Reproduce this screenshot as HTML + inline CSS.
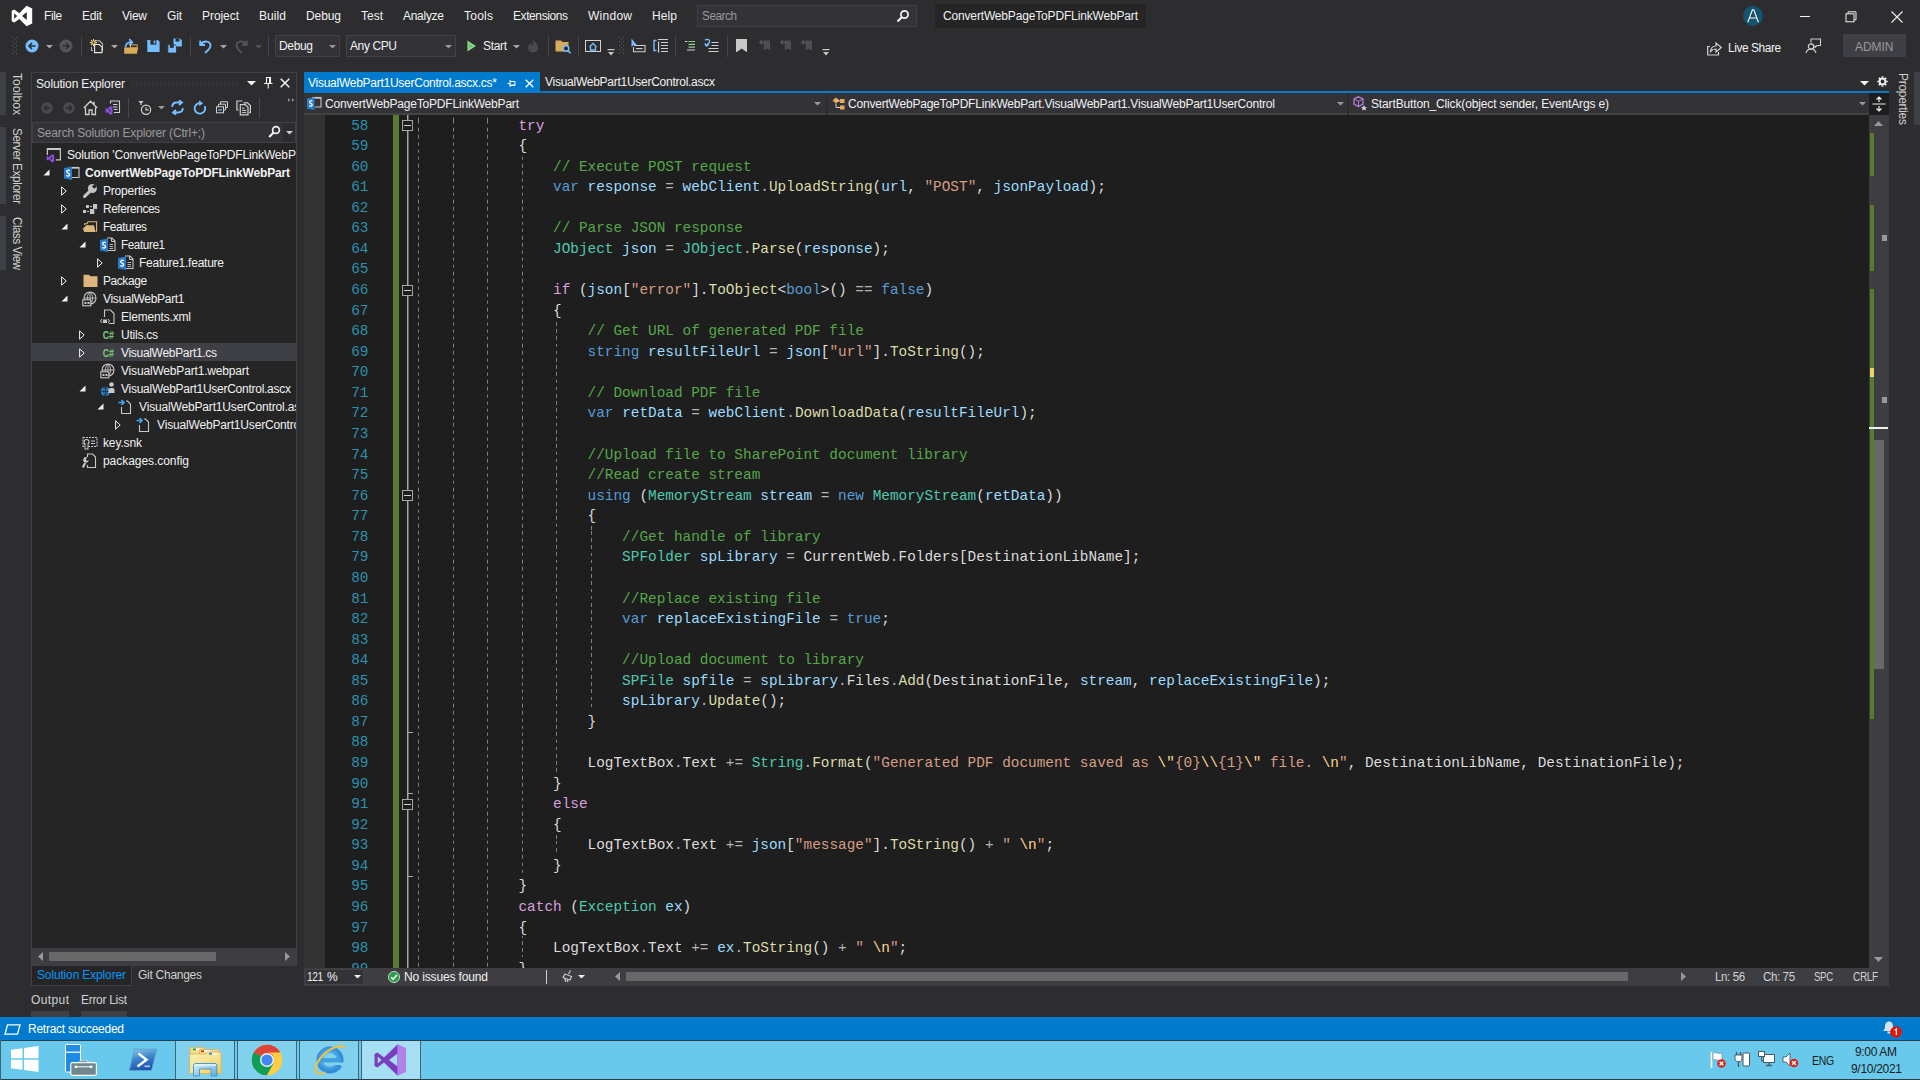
<!DOCTYPE html>
<html><head><meta charset="utf-8"><title>VS</title><style>
html,body{margin:0;padding:0;font-family:"Liberation Sans", sans-serif;}
body{width:1920px;height:1080px;overflow:hidden;background:#2D2D30;position:relative;font-family:"Liberation Sans", sans-serif;font-size:12px;}
.b{position:absolute;display:block;}
.t{position:absolute;white-space:pre;}
.cl{position:absolute;white-space:pre;font-family:"Liberation Mono", monospace;font-size:14.4px;line-height:20px;color:#DCDCDC;left:380.3px;}
.k{color:#569CD6}.c{color:#D8A0DF}.m{color:#57A64A}.s{color:#D69D85}.e{color:#FFD68F}.y{color:#4EC9B0}.v{color:#9CDCFE}.f{color:#DCDCAA}.o{color:#B4B4B4}
</style></head><body>
<div class="t" id="t1" style="left:44px;top:8px;font-size:12px;line-height:16px;color:#F1F1F1;letter-spacing:-0.400px;transform:scaleX(0.9926);transform-origin:0 50%;">File</div>
<div class="t" id="t2" style="left:82px;top:8px;font-size:12px;line-height:16px;color:#F1F1F1;letter-spacing:-0.229px;">Edit</div>
<div class="t" id="t3" style="left:122px;top:8px;font-size:12px;line-height:16px;color:#F1F1F1;letter-spacing:-0.266px;">View</div>
<div class="t" id="t4" style="left:167px;top:8px;font-size:12px;line-height:16px;color:#F1F1F1;letter-spacing:-0.172px;">Git</div>
<div class="t" id="t5" style="left:202px;top:8px;font-size:12px;line-height:16px;color:#F1F1F1;letter-spacing:-0.060px;">Project</div>
<div class="t" id="t6" style="left:259px;top:8px;font-size:12px;line-height:16px;color:#F1F1F1;letter-spacing:0.078px;">Build</div>
<div class="t" id="t7" style="left:306px;top:8px;font-size:12px;line-height:16px;color:#F1F1F1;letter-spacing:-0.094px;">Debug</div>
<div class="t" id="t8" style="left:361px;top:8px;font-size:12px;line-height:16px;color:#F1F1F1;letter-spacing:-0.005px;">Test</div>
<div class="t" id="t9" style="left:403px;top:8px;font-size:12px;line-height:16px;color:#F1F1F1;letter-spacing:-0.284px;">Analyze</div>
<div class="t" id="t10" style="left:464px;top:8px;font-size:12px;line-height:16px;color:#F1F1F1;letter-spacing:0.246px;">Tools</div>
<div class="t" id="t11" style="left:513px;top:8px;font-size:12px;line-height:16px;color:#F1F1F1;letter-spacing:-0.400px;transform:scaleX(0.9982);transform-origin:0 50%;">Extensions</div>
<div class="t" id="t12" style="left:588px;top:8px;font-size:12px;line-height:16px;color:#F1F1F1;letter-spacing:0.263px;">Window</div>
<div class="t" id="t13" style="left:652px;top:8px;font-size:12px;line-height:16px;color:#F1F1F1;letter-spacing:0.104px;">Help</div>
<div class="b" style="left:697px;top:5px;width:220px;height:22px;background:#333337;border:1px solid #3F3F46;box-sizing:border-box;"></div>
<div class="t" id="t14" style="left:702px;top:8px;font-size:12px;line-height:16px;color:#999999;letter-spacing:-0.400px;transform:scaleX(0.9729);transform-origin:0 50%;">Search</div>
<div class="b" style="left:935px;top:4px;width:211px;height:24px;background:#252526;"></div>
<div class="t" id="t15" style="left:943px;top:8px;font-size:12px;line-height:16px;color:#F1F1F1;letter-spacing:-0.161px;">ConvertWebPageToPDFLinkWebPart</div>
<div class="b" style="left:275px;top:35px;width:65px;height:22px;background:#333337;border:1px solid #434346;box-sizing:border-box;"></div>
<div class="t" id="t16" style="left:279px;top:38px;font-size:12px;line-height:16px;color:#F1F1F1;letter-spacing:-0.344px;">Debug</div>
<div class="b" style="left:346px;top:35px;width:110px;height:22px;background:#333337;border:1px solid #434346;box-sizing:border-box;"></div>
<div class="t" id="t17" style="left:350px;top:38px;font-size:12px;line-height:16px;color:#F1F1F1;letter-spacing:-0.393px;">Any CPU</div>
<div class="t" id="t18" style="left:483px;top:38px;font-size:12px;line-height:16px;color:#F1F1F1;letter-spacing:-0.336px;">Start</div>
<div class="t" id="t19" style="left:1728px;top:40.2px;font-size:12px;line-height:16px;color:#F1F1F1;letter-spacing:-0.400px;transform:scaleX(0.9865);transform-origin:0 50%;">Live Share</div>
<div class="b" style="left:1843px;top:34px;width:63px;height:23px;background:#3F3F46;"></div>
<div class="t" id="t20" style="left:1855px;top:38.6px;font-size:12px;line-height:16px;color:#999999;letter-spacing:-0.043px;">ADMIN</div>
<div class="b" style="left:0px;top:72px;width:6px;height:43px;background:#3F3F46;"></div>
<div class="b" style="left:0px;top:127px;width:6px;height:77px;background:#3F3F46;"></div>
<div class="b" style="left:0px;top:216px;width:6px;height:54px;background:#3F3F46;"></div>
<div class="t" id="t21" style="left:25px;top:72.5px;color:#D0D0D0;font-size:12px;line-height:16px;transform-origin:0 0;transform:rotate(90deg);letter-spacing:0.104px;">Toolbox</div>
<div class="t" id="t22" style="left:25px;top:127.5px;color:#D0D0D0;font-size:12px;line-height:16px;transform-origin:0 0;transform:rotate(90deg) scaleX(0.9787);letter-spacing:-0.400px;">Server Explorer</div>
<div class="t" id="t23" style="left:25px;top:217px;color:#D0D0D0;font-size:12px;line-height:16px;transform-origin:0 0;transform:rotate(90deg) scaleX(0.9570);letter-spacing:-0.400px;">Class View</div>
<div class="b" style="left:1914px;top:72px;width:6px;height:53px;background:#3F3F46;"></div>
<div class="t" id="t24" style="left:1911px;top:72.5px;color:#D0D0D0;font-size:12px;line-height:16px;transform-origin:0 0;transform:rotate(90deg);letter-spacing:-0.300px;">Properties</div>
<div class="b" style="left:31px;top:72px;width:266px;height:894px;background:#252526;border:1px solid #3F3F46;box-sizing:border-box;"></div>
<div class="b" style="left:32px;top:73px;width:264px;height:21px;background:#2D2D30;"></div>
<div class="t" id="t25" style="left:36px;top:75.6px;font-size:12px;line-height:16px;color:#F1F1F1;letter-spacing:-0.149px;">Solution Explorer</div>
<div class="b" style="left:32px;top:94px;width:264px;height:28px;background:#2D2D30;"></div>
<div class="b" style="left:32px;top:122px;width:264px;height:21px;background:#333337;border:1px solid #3F3F46;box-sizing:border-box;"></div>
<div class="t" id="t26" style="left:37px;top:125px;font-size:12px;line-height:16px;color:#999999;letter-spacing:-0.159px;">Search Solution Explorer (Ctrl+;)</div>
<div class="b" style="left:32px;top:143px;width:264px;height:805px;background:#252526;"></div>
<div class="b" style="left:32px;top:343px;width:264px;height:18px;background:#3F3F46;"></div>
<div class="t" id="t27" style="left:67px;top:147px;font-size:12px;line-height:16px;color:#F1F1F1;width:229px;overflow:hidden;letter-spacing:-0.16px;">Solution &#x27;ConvertWebPageToPDFLinkWebPart&#x27; (1 of 1 project)</div>
<div class="t" id="t28" style="left:85px;top:165px;font-size:12px;line-height:16px;color:#F1F1F1;font-weight:bold;letter-spacing:-0.173px;">ConvertWebPageToPDFLinkWebPart</div>
<div class="t" id="t29" style="left:103px;top:183px;font-size:12px;line-height:16px;color:#F1F1F1;letter-spacing:-0.189px;">Properties</div>
<div class="t" id="t30" style="left:103px;top:201px;font-size:12px;line-height:16px;color:#F1F1F1;letter-spacing:-0.400px;transform:scaleX(0.9874);transform-origin:0 50%;">References</div>
<div class="t" id="t31" style="left:103px;top:219px;font-size:12px;line-height:16px;color:#F1F1F1;letter-spacing:-0.400px;transform:scaleX(0.9882);transform-origin:0 50%;">Features</div>
<div class="t" id="t32" style="left:121px;top:237px;font-size:12px;line-height:16px;color:#F1F1F1;letter-spacing:-0.400px;transform:scaleX(0.9744);transform-origin:0 50%;">Feature1</div>
<div class="t" id="t33" style="left:139px;top:255px;font-size:12px;line-height:16px;color:#F1F1F1;letter-spacing:-0.249px;">Feature1.feature</div>
<div class="t" id="t34" style="left:103px;top:273px;font-size:12px;line-height:16px;color:#F1F1F1;letter-spacing:-0.400px;transform:scaleX(0.9935);transform-origin:0 50%;">Package</div>
<div class="t" id="t35" style="left:103px;top:291px;font-size:12px;line-height:16px;color:#F1F1F1;letter-spacing:-0.316px;">VisualWebPart1</div>
<div class="t" id="t36" style="left:121px;top:309px;font-size:12px;line-height:16px;color:#F1F1F1;letter-spacing:-0.185px;">Elements.xml</div>
<div class="t" id="t37" style="left:121px;top:327px;font-size:12px;line-height:16px;color:#F1F1F1;letter-spacing:-0.239px;">Utils.cs</div>
<div class="t" id="t38" style="left:121px;top:345px;font-size:12px;line-height:16px;color:#F1F1F1;letter-spacing:-0.310px;">VisualWebPart1.cs</div>
<div class="t" id="t39" style="left:121px;top:363px;font-size:12px;line-height:16px;color:#F1F1F1;letter-spacing:-0.173px;">VisualWebPart1.webpart</div>
<div class="t" id="t40" style="left:121px;top:381px;font-size:12px;line-height:16px;color:#F1F1F1;letter-spacing:-0.263px;">VisualWebPart1UserControl.ascx</div>
<div class="t" id="t41" style="left:139px;top:399px;font-size:12px;line-height:16px;color:#F1F1F1;width:157px;overflow:hidden;letter-spacing:-0.16px;">VisualWebPart1UserControl.ascx.cs</div>
<div class="t" id="t42" style="left:157px;top:417px;font-size:12px;line-height:16px;color:#F1F1F1;width:139px;overflow:hidden;letter-spacing:-0.16px;">VisualWebPart1UserControl.ascx.designer.cs</div>
<div class="t" id="t43" style="left:103px;top:435px;font-size:12px;line-height:16px;color:#F1F1F1;letter-spacing:-0.133px;">key.snk</div>
<div class="t" id="t44" style="left:103px;top:453px;font-size:12px;line-height:16px;color:#F1F1F1;letter-spacing:-0.052px;">packages.config</div>
<div class="b" style="left:32px;top:948px;width:264px;height:18px;background:#3E3E42;"></div>
<div class="b" style="left:49px;top:952px;width:167px;height:9px;background:#686868;"></div>
<div class="b" style="left:31px;top:966px;width:101px;height:20px;background:#252526;border:1px solid #3F3F46;box-sizing:border-box;border-top:none;"></div>
<div class="t" id="t45" style="left:37px;top:967px;font-size:12px;line-height:16px;color:#0097FB;letter-spacing:-0.149px;">Solution Explorer</div>
<div class="t" id="t46" style="left:138px;top:967px;font-size:12px;line-height:16px;color:#D0D0D0;letter-spacing:-0.270px;">Git Changes</div>
<div class="t" id="t47" style="left:31px;top:992px;font-size:12px;line-height:16px;color:#D0D0D0;letter-spacing:0.394px;">Output</div>
<div class="t" id="t48" style="left:81px;top:992px;font-size:12px;line-height:16px;color:#D0D0D0;letter-spacing:-0.299px;">Error List</div>
<div class="b" style="left:31px;top:1011px;width:38px;height:6px;background:#3F3F46;"></div>
<div class="b" style="left:81px;top:1011px;width:46px;height:6px;background:#3F3F46;"></div>
<div class="b" style="left:304px;top:72px;width:236px;height:20px;background:#007ACC;"></div>
<div class="t" id="t49" style="left:308px;top:74.5px;font-size:12px;line-height:16px;color:#FFFFFF;letter-spacing:-0.262px;">VisualWebPart1UserControl.ascx.cs*</div>
<div class="t" id="t50" style="left:545px;top:73.7px;font-size:12px;line-height:16px;color:#F1F1F1;letter-spacing:-0.263px;">VisualWebPart1UserControl.ascx</div>
<div class="b" style="left:304px;top:91px;width:1585px;height:2px;background:#007ACC;"></div>
<div class="b" style="left:304px;top:93px;width:1585px;height:22px;background:#2D2D30;"></div>
<div class="b" style="left:304px;top:93px;width:1565px;height:22px;background:#333337;border-bottom:2px solid #434346;box-sizing:border-box;"></div>
<div class="b" style="left:826px;top:93px;width:2px;height:22px;background:#2D2D30;"></div>
<div class="b" style="left:1347px;top:93px;width:2px;height:22px;background:#2D2D30;"></div>
<div class="t" id="t51" style="left:325px;top:96px;font-size:12px;line-height:16px;color:#F1F1F1;letter-spacing:-0.195px;">ConvertWebPageToPDFLinkWebPart</div>
<div class="t" id="t52" style="left:848px;top:96px;font-size:12px;line-height:16px;color:#F1F1F1;letter-spacing:-0.208px;">ConvertWebPageToPDFLinkWebPart.VisualWebPart1.VisualWebPart1UserControl</div>
<div class="t" id="t53" style="left:1371px;top:96px;font-size:12px;line-height:16px;color:#F1F1F1;letter-spacing:-0.139px;">StartButton_Click(object sender, EventArgs e)</div>
<div class="b" style="left:304px;top:115px;width:1565px;height:853px;background:#1E1E1E;"></div>
<div class="b" style="left:304px;top:115px;width:21px;height:853px;background:#333333;"></div>
<div class="b" style="left:393px;top:115px;width:6px;height:853px;background:#577B31;"></div>
<div class="b" style="left:407px;top:115px;width:1px;height:853px;background:#A5A5A5;"></div>
<div class="b" style="left:408px;top:115px;width:1px;height:853px;background:#5E6062;"></div>
<div class="b" style="left:418px;top:115px;height:853px;width:1px;background:repeating-linear-gradient(to bottom,#808080 0,#808080 3.5px,transparent 3.5px,transparent 7.2px);background-position:0 5.70px;"></div>
<div class="b" style="left:453px;top:115px;height:853px;width:1px;background:repeating-linear-gradient(to bottom,#808080 0,#808080 3.5px,transparent 3.5px,transparent 7.2px);background-position:0 5.70px;"></div>
<div class="b" style="left:487px;top:115px;height:853px;width:1px;background:repeating-linear-gradient(to bottom,#808080 0,#808080 3.5px,transparent 3.5px,transparent 7.2px);background-position:0 5.70px;"></div>
<div class="b" style="left:522px;top:154.93px;height:719.775px;width:1px;background:repeating-linear-gradient(to bottom,#808080 0,#808080 3.5px,transparent 3.5px,transparent 7.2px);background-position:0 1.77px;"></div>
<div class="b" style="left:556px;top:319.45px;height:452.43px;width:1px;background:repeating-linear-gradient(to bottom,#808080 0,#808080 3.5px,transparent 3.5px,transparent 7.2px);background-position:0 2.85px;"></div>
<div class="b" style="left:556px;top:833.575px;height:20.565px;width:1px;background:repeating-linear-gradient(to bottom,#808080 0,#808080 3.5px,transparent 3.5px,transparent 7.2px);background-position:0 7.12px;"></div>
<div class="b" style="left:591px;top:525.1px;height:185.085px;width:1px;background:repeating-linear-gradient(to bottom,#808080 0,#808080 3.5px,transparent 3.5px,transparent 7.2px);background-position:0 6.00px;"></div>
<div class="b" style="left:522px;top:936.4px;height:20.565px;width:1px;background:repeating-linear-gradient(to bottom,#808080 0,#808080 3.5px,transparent 3.5px,transparent 7.2px);background-position:0 5.10px;"></div>
<div class="b" style="left:0;top:114px;width:1868px;height:854px;overflow:hidden;">
<div class="cl" style="left:325px;width:43.5px;text-align:right;color:#2B91AF;top:1.50px;">58</div>
<div class="cl" style="top:1.50px;">                <span class="c">try</span></div>
<div class="cl" style="left:325px;width:43.5px;text-align:right;color:#2B91AF;top:22.07px;">59</div>
<div class="cl" style="top:22.07px;">                {</div>
<div class="cl" style="left:325px;width:43.5px;text-align:right;color:#2B91AF;top:42.63px;">60</div>
<div class="cl" style="top:42.63px;">                    <span class="m">// Execute POST request</span></div>
<div class="cl" style="left:325px;width:43.5px;text-align:right;color:#2B91AF;top:63.20px;">61</div>
<div class="cl" style="top:63.20px;">                    <span class="k">var</span> <span class="v">response</span> <span class="o">=</span> <span class="v">webClient</span><span class="o">.</span><span class="f">UploadString</span>(<span class="v">url</span>, <span class="s">&quot;POST&quot;</span>, <span class="v">jsonPayload</span>);</div>
<div class="cl" style="left:325px;width:43.5px;text-align:right;color:#2B91AF;top:83.76px;">62</div>
<div class="cl" style="left:325px;width:43.5px;text-align:right;color:#2B91AF;top:104.33px;">63</div>
<div class="cl" style="top:104.33px;">                    <span class="m">// Parse JSON response</span></div>
<div class="cl" style="left:325px;width:43.5px;text-align:right;color:#2B91AF;top:124.89px;">64</div>
<div class="cl" style="top:124.89px;">                    <span class="y">JObject</span> <span class="v">json</span> <span class="o">=</span> <span class="y">JObject</span><span class="o">.</span><span class="f">Parse</span>(<span class="v">response</span>);</div>
<div class="cl" style="left:325px;width:43.5px;text-align:right;color:#2B91AF;top:145.46px;">65</div>
<div class="cl" style="left:325px;width:43.5px;text-align:right;color:#2B91AF;top:166.02px;">66</div>
<div class="cl" style="top:166.02px;">                    <span class="c">if</span> (<span class="v">json</span>[<span class="s">&quot;error&quot;</span>].<span class="f">ToObject</span>&lt;<span class="k">bool</span>&gt;() <span class="o">==</span> <span class="k">false</span>)</div>
<div class="cl" style="left:325px;width:43.5px;text-align:right;color:#2B91AF;top:186.59px;">67</div>
<div class="cl" style="top:186.59px;">                    {</div>
<div class="cl" style="left:325px;width:43.5px;text-align:right;color:#2B91AF;top:207.15px;">68</div>
<div class="cl" style="top:207.15px;">                        <span class="m">// Get URL of generated PDF file</span></div>
<div class="cl" style="left:325px;width:43.5px;text-align:right;color:#2B91AF;top:227.72px;">69</div>
<div class="cl" style="top:227.72px;">                        <span class="k">string</span> <span class="v">resultFileUrl</span> <span class="o">=</span> <span class="v">json</span>[<span class="s">&quot;url&quot;</span>].<span class="f">ToString</span>();</div>
<div class="cl" style="left:325px;width:43.5px;text-align:right;color:#2B91AF;top:248.28px;">70</div>
<div class="cl" style="left:325px;width:43.5px;text-align:right;color:#2B91AF;top:268.85px;">71</div>
<div class="cl" style="top:268.85px;">                        <span class="m">// Download PDF file</span></div>
<div class="cl" style="left:325px;width:43.5px;text-align:right;color:#2B91AF;top:289.41px;">72</div>
<div class="cl" style="top:289.41px;">                        <span class="k">var</span> <span class="v">retData</span> <span class="o">=</span> <span class="v">webClient</span><span class="o">.</span><span class="f">DownloadData</span>(<span class="v">resultFileUrl</span>);</div>
<div class="cl" style="left:325px;width:43.5px;text-align:right;color:#2B91AF;top:309.98px;">73</div>
<div class="cl" style="left:325px;width:43.5px;text-align:right;color:#2B91AF;top:330.54px;">74</div>
<div class="cl" style="top:330.54px;">                        <span class="m">//Upload file to SharePoint document library</span></div>
<div class="cl" style="left:325px;width:43.5px;text-align:right;color:#2B91AF;top:351.11px;">75</div>
<div class="cl" style="top:351.11px;">                        <span class="m">//Read create stream</span></div>
<div class="cl" style="left:325px;width:43.5px;text-align:right;color:#2B91AF;top:371.67px;">76</div>
<div class="cl" style="top:371.67px;">                        <span class="k">using</span> (<span class="y">MemoryStream</span> <span class="v">stream</span> <span class="o">=</span> <span class="k">new</span> <span class="y">MemoryStream</span>(<span class="v">retData</span>))</div>
<div class="cl" style="left:325px;width:43.5px;text-align:right;color:#2B91AF;top:392.24px;">77</div>
<div class="cl" style="top:392.24px;">                        {</div>
<div class="cl" style="left:325px;width:43.5px;text-align:right;color:#2B91AF;top:412.80px;">78</div>
<div class="cl" style="top:412.80px;">                            <span class="m">//Get handle of library</span></div>
<div class="cl" style="left:325px;width:43.5px;text-align:right;color:#2B91AF;top:433.37px;">79</div>
<div class="cl" style="top:433.37px;">                            <span class="y">SPFolder</span> <span class="v">spLibrary</span> <span class="o">=</span> CurrentWeb<span class="o">.</span>Folders[DestinationLibName];</div>
<div class="cl" style="left:325px;width:43.5px;text-align:right;color:#2B91AF;top:453.93px;">80</div>
<div class="cl" style="left:325px;width:43.5px;text-align:right;color:#2B91AF;top:474.50px;">81</div>
<div class="cl" style="top:474.50px;">                            <span class="m">//Replace existing file</span></div>
<div class="cl" style="left:325px;width:43.5px;text-align:right;color:#2B91AF;top:495.06px;">82</div>
<div class="cl" style="top:495.06px;">                            <span class="k">var</span> <span class="v">replaceExistingFile</span> <span class="o">=</span> <span class="k">true</span>;</div>
<div class="cl" style="left:325px;width:43.5px;text-align:right;color:#2B91AF;top:515.62px;">83</div>
<div class="cl" style="left:325px;width:43.5px;text-align:right;color:#2B91AF;top:536.19px;">84</div>
<div class="cl" style="top:536.19px;">                            <span class="m">//Upload document to library</span></div>
<div class="cl" style="left:325px;width:43.5px;text-align:right;color:#2B91AF;top:556.75px;">85</div>
<div class="cl" style="top:556.75px;">                            <span class="y">SPFile</span> <span class="v">spfile</span> <span class="o">=</span> <span class="v">spLibrary</span><span class="o">.</span>Files<span class="o">.</span><span class="f">Add</span>(DestinationFile, <span class="v">stream</span>, <span class="v">replaceExistingFile</span>);</div>
<div class="cl" style="left:325px;width:43.5px;text-align:right;color:#2B91AF;top:577.32px;">86</div>
<div class="cl" style="top:577.32px;">                            <span class="v">spLibrary</span><span class="o">.</span><span class="f">Update</span>();</div>
<div class="cl" style="left:325px;width:43.5px;text-align:right;color:#2B91AF;top:597.88px;">87</div>
<div class="cl" style="top:597.88px;">                        }</div>
<div class="cl" style="left:325px;width:43.5px;text-align:right;color:#2B91AF;top:618.45px;">88</div>
<div class="cl" style="left:325px;width:43.5px;text-align:right;color:#2B91AF;top:639.01px;">89</div>
<div class="cl" style="top:639.01px;">                        LogTextBox<span class="o">.</span>Text <span class="o">+=</span> <span class="y">String</span><span class="o">.</span><span class="f">Format</span>(<span class="s">&quot;Generated PDF document saved as </span><span class="e">\&quot;</span><span class="s">{0}</span><span class="e">\\</span><span class="s">{1}</span><span class="e">\&quot;</span><span class="s"> file. </span><span class="e">\n</span><span class="s">&quot;</span>, DestinationLibName, DestinationFile);</div>
<div class="cl" style="left:325px;width:43.5px;text-align:right;color:#2B91AF;top:659.58px;">90</div>
<div class="cl" style="top:659.58px;">                    }</div>
<div class="cl" style="left:325px;width:43.5px;text-align:right;color:#2B91AF;top:680.15px;">91</div>
<div class="cl" style="top:680.15px;">                    <span class="c">else</span></div>
<div class="cl" style="left:325px;width:43.5px;text-align:right;color:#2B91AF;top:700.71px;">92</div>
<div class="cl" style="top:700.71px;">                    {</div>
<div class="cl" style="left:325px;width:43.5px;text-align:right;color:#2B91AF;top:721.28px;">93</div>
<div class="cl" style="top:721.28px;">                        LogTextBox<span class="o">.</span>Text <span class="o">+=</span> <span class="v">json</span>[<span class="s">&quot;message&quot;</span>].<span class="f">ToString</span>() <span class="o">+</span> <span class="s">&quot; </span><span class="e">\n</span><span class="s">&quot;</span>;</div>
<div class="cl" style="left:325px;width:43.5px;text-align:right;color:#2B91AF;top:741.84px;">94</div>
<div class="cl" style="top:741.84px;">                    }</div>
<div class="cl" style="left:325px;width:43.5px;text-align:right;color:#2B91AF;top:762.41px;">95</div>
<div class="cl" style="top:762.41px;">                }</div>
<div class="cl" style="left:325px;width:43.5px;text-align:right;color:#2B91AF;top:782.97px;">96</div>
<div class="cl" style="top:782.97px;">                <span class="c">catch</span> (<span class="y">Exception</span> <span class="v">ex</span>)</div>
<div class="cl" style="left:325px;width:43.5px;text-align:right;color:#2B91AF;top:803.54px;">97</div>
<div class="cl" style="top:803.54px;">                {</div>
<div class="cl" style="left:325px;width:43.5px;text-align:right;color:#2B91AF;top:824.10px;">98</div>
<div class="cl" style="top:824.10px;">                    LogTextBox<span class="o">.</span>Text <span class="o">+=</span> <span class="v">ex</span><span class="o">.</span><span class="f">ToString</span>() <span class="o">+</span> <span class="s">&quot; </span><span class="e">\n</span><span class="s">&quot;</span>;</div>
<div class="cl" style="left:325px;width:43.5px;text-align:right;color:#2B91AF;top:844.67px;">99</div>
<div class="cl" style="top:844.67px;">                }</div>
</div>
<svg class="b" style="left:402px;top:120px;" width="11" height="11" viewBox="0 0 11 11"><rect x="0.5" y="0.5" width="10" height="10" fill="#1E1E1E" stroke="#A5A5A5"/><rect x="2" y="5" width="7" height="1" fill="#D0D0D0"/></svg>
<svg class="b" style="left:402px;top:285px;" width="11" height="11" viewBox="0 0 11 11"><rect x="0.5" y="0.5" width="10" height="10" fill="#1E1E1E" stroke="#A5A5A5"/><rect x="2" y="5" width="7" height="1" fill="#D0D0D0"/></svg>
<svg class="b" style="left:402px;top:490px;" width="11" height="11" viewBox="0 0 11 11"><rect x="0.5" y="0.5" width="10" height="10" fill="#1E1E1E" stroke="#A5A5A5"/><rect x="2" y="5" width="7" height="1" fill="#D0D0D0"/></svg>
<svg class="b" style="left:402px;top:799px;" width="11" height="11" viewBox="0 0 11 11"><rect x="0.5" y="0.5" width="10" height="10" fill="#1E1E1E" stroke="#A5A5A5"/><rect x="2" y="5" width="7" height="1" fill="#D0D0D0"/></svg>
<div class="b" style="left:407px;top:732px;width:6px;height:1px;background:#A5A5A5;"></div>
<div class="b" style="left:407px;top:793px;width:6px;height:1px;background:#A5A5A5;"></div>
<div class="b" style="left:407px;top:876px;width:6px;height:1px;background:#A5A5A5;"></div>
<div class="b" style="left:1869px;top:93px;width:20px;height:22px;background:#1E1E1E;"></div>
<div class="b" style="left:1869px;top:115px;width:20px;height:853px;background:#3E3E42;"></div>
<div class="b" style="left:1870px;top:133px;width:4px;height:43px;background:#577B31;"></div>
<div class="b" style="left:1870px;top:205px;width:4px;height:66px;background:#577B31;"></div>
<div class="b" style="left:1870px;top:289px;width:4px;height:430px;background:#577B31;"></div>
<div class="b" style="left:1870px;top:368px;width:4px;height:9px;background:#E8D468;"></div>
<div class="b" style="left:1882px;top:235px;width:5px;height:6px;background:#9A9A9A;"></div>
<div class="b" style="left:1882px;top:397px;width:5px;height:6px;background:#9A9A9A;"></div>
<div class="b" style="left:1869px;top:427px;width:19px;height:2px;background:#F1F1F1;"></div>
<div class="b" style="left:1874px;top:440px;width:10px;height:229px;background:#686868;"></div>
<svg class="b" style="left:1874px;top:121px;" width="9" height="5" viewBox="0 0 9 5"><path d="M0 5 L4.5 0 L9 5 Z" fill="#999"/></svg>
<svg class="b" style="left:1874px;top:957px;" width="9" height="5" viewBox="0 0 9 5"><path d="M0 0 L4.5 5 L9 0 Z" fill="#999"/></svg>
<div class="b" style="left:304px;top:968px;width:1585px;height:18px;background:#3E3E42;"></div>
<div class="b" style="left:305px;top:969px;width:59px;height:16px;background:#333337;border:1px solid #434346;box-sizing:border-box;"></div>
<div class="t" id="t54" style="left:307px;top:969px;font-size:12px;line-height:16px;color:#F1F1F1;letter-spacing:-0.400px;transform:scaleX(0.8387);transform-origin:0 50%;">121</div>
<div class="t" id="t55" style="left:327px;top:969px;font-size:12px;line-height:16px;color:#F1F1F1;">%</div>
<div class="t" id="t56" style="left:404px;top:969px;font-size:12px;line-height:16px;color:#F1F1F1;letter-spacing:-0.147px;">No issues found</div>
<div class="b" style="left:546px;top:970px;width:1px;height:14px;background:#D0D0D0;"></div>
<div class="b" style="left:626px;top:972px;width:1002px;height:9px;background:#686868;"></div>
<div class="t" id="t57" style="left:1715px;top:969px;font-size:12px;line-height:16px;color:#D0D0D0;letter-spacing:-0.400px;transform:scaleX(0.9588);transform-origin:0 50%;">Ln: 56</div>
<div class="t" id="t58" style="left:1763px;top:969px;font-size:12px;line-height:16px;color:#D0D0D0;letter-spacing:-0.400px;transform:scaleX(0.9616);transform-origin:0 50%;">Ch: 75</div>
<div class="t" id="t59" style="left:1814px;top:969px;font-size:12px;line-height:16px;color:#D0D0D0;letter-spacing:-0.400px;transform:scaleX(0.8020);transform-origin:0 50%;">SPC</div>
<div class="t" id="t60" style="left:1853px;top:969px;font-size:12px;line-height:16px;color:#D0D0D0;letter-spacing:-0.400px;transform:scaleX(0.8359);transform-origin:0 50%;">CRLF</div>
<div class="b" style="left:0px;top:1017px;width:1920px;height:23px;background:#007ACC;"></div>
<div class="t" id="t61" style="left:28px;top:1021px;font-size:12px;line-height:16px;color:#FFFFFF;letter-spacing:-0.254px;">Retract succeeded</div>
<div class="b" style="left:0px;top:1040px;width:1920px;height:40px;background:#68C9EC;"></div>
<div class="b" style="left:0px;top:1040px;width:1920px;height:1px;background:#2C3E48;"></div>
<div class="b" style="left:0px;top:1079px;width:1920px;height:1px;background:#2C3E48;"></div>
<div class="b" style="left:0px;top:1040px;width:1px;height:40px;background:#3D6578;"></div>
<div class="t" id="t62" style="left:1812px;top:1053px;font-size:12px;line-height:16px;color:#1a1a1a;letter-spacing:-0.400px;transform:scaleX(0.8764);transform-origin:0 50%;">ENG</div>
<div class="t" id="t63" style="left:1855px;top:1044px;font-size:12px;line-height:16px;color:#1a1a1a;letter-spacing:-0.339px;">9:00 AM</div>
<div class="t" id="t64" style="left:1851px;top:1061px;font-size:12px;line-height:16px;color:#1a1a1a;letter-spacing:-0.299px;">9/10/2021</div>
<svg class="b" style="left:11px;top:5px;" width="22" height="22" viewBox="0 0 22 22"><path fill-rule="evenodd" fill="#FFFFFF" d="M15.6 0.8 L21.2 3.4 L21.2 18.6 L15.6 21.3 L8.3 13.9 L3.3 17.6 L0.7 16.2 L0.7 5.8 L3.3 4.5 L8.3 8.2 Z M3.2 8.2 L3.2 14 L6.1 11 Z M15.8 7.1 L15.8 15 L11 11 Z"/></svg>
<svg class="b" style="left:896px;top:9px;" width="14" height="14" viewBox="0 0 14 14"><circle cx="8.5" cy="5.5" r="3.6" fill="none" stroke="#F1F1F1" stroke-width="1.8"/><path d="M6 8 L1.5 12.5" stroke="#F1F1F1" stroke-width="2.2"/></svg>
<svg class="b" style="left:1743px;top:6px;" width="20" height="20" viewBox="0 0 20 20"><circle cx="10" cy="10" r="10" fill="#14546E"/><path d="M4.8 16.3 L9.4 3.8 L10.8 3.8 L15.4 16.3 M6.4 12 L13.8 12" fill="none" stroke="#FFFFFF" stroke-width="1.1"/></svg>
<div class="b" style="left:1800px;top:16px;width:10px;height:1px;background:#F1F1F1;"></div>
<svg class="b" style="left:1845px;top:11px;" width="12" height="12" viewBox="0 0 12 12"><path d="M3 2.5 V0.8 H11 V8.8 H9.3" fill="none" stroke="#F1F1F1"/><rect x="1" y="2.8" width="8" height="8" fill="none" stroke="#F1F1F1"/></svg>
<svg class="b" style="left:1891px;top:11px;" width="12" height="12" viewBox="0 0 12 12"><path d="M0.5 0.5 L11.5 11.5 M11.5 0.5 L0.5 11.5" stroke="#F1F1F1" stroke-width="1.1"/></svg>
<svg class="b" style="left:12px;top:37px;" width="6" height="18" viewBox="0 0 6 18"><rect x="0" y="0" width="1" height="1" fill="#5A5A60"/><rect x="4" y="0" width="1" height="1" fill="#5A5A60"/><rect x="2" y="2" width="1" height="1" fill="#5A5A60"/><rect x="0" y="4" width="1" height="1" fill="#5A5A60"/><rect x="4" y="4" width="1" height="1" fill="#5A5A60"/><rect x="2" y="6" width="1" height="1" fill="#5A5A60"/><rect x="0" y="8" width="1" height="1" fill="#5A5A60"/><rect x="4" y="8" width="1" height="1" fill="#5A5A60"/><rect x="2" y="10" width="1" height="1" fill="#5A5A60"/><rect x="0" y="12" width="1" height="1" fill="#5A5A60"/><rect x="4" y="12" width="1" height="1" fill="#5A5A60"/><rect x="2" y="14" width="1" height="1" fill="#5A5A60"/><rect x="0" y="16" width="1" height="1" fill="#5A5A60"/><rect x="4" y="16" width="1" height="1" fill="#5A5A60"/></svg>
<svg class="b" style="left:619px;top:37px;" width="6" height="18" viewBox="0 0 6 18"><rect x="0" y="0" width="1" height="1" fill="#5A5A60"/><rect x="4" y="0" width="1" height="1" fill="#5A5A60"/><rect x="2" y="2" width="1" height="1" fill="#5A5A60"/><rect x="0" y="4" width="1" height="1" fill="#5A5A60"/><rect x="4" y="4" width="1" height="1" fill="#5A5A60"/><rect x="2" y="6" width="1" height="1" fill="#5A5A60"/><rect x="0" y="8" width="1" height="1" fill="#5A5A60"/><rect x="4" y="8" width="1" height="1" fill="#5A5A60"/><rect x="2" y="10" width="1" height="1" fill="#5A5A60"/><rect x="0" y="12" width="1" height="1" fill="#5A5A60"/><rect x="4" y="12" width="1" height="1" fill="#5A5A60"/><rect x="2" y="14" width="1" height="1" fill="#5A5A60"/><rect x="0" y="16" width="1" height="1" fill="#5A5A60"/><rect x="4" y="16" width="1" height="1" fill="#5A5A60"/></svg>
<div class="b" style="left:81px;top:36px;width:1px;height:21px;background:#46464A;"></div>
<div class="b" style="left:190px;top:36px;width:1px;height:21px;background:#46464A;"></div>
<div class="b" style="left:268px;top:36px;width:1px;height:21px;background:#46464A;"></div>
<div class="b" style="left:548px;top:36px;width:1px;height:21px;background:#46464A;"></div>
<div class="b" style="left:578px;top:36px;width:1px;height:21px;background:#46464A;"></div>
<div class="b" style="left:675px;top:36px;width:1px;height:21px;background:#46464A;"></div>
<div class="b" style="left:727px;top:36px;width:1px;height:21px;background:#46464A;"></div>
<svg class="b" style="left:25px;top:39px;" width="14" height="14" viewBox="0 0 14 14"><circle cx="7" cy="7" r="6.5" fill="#75BEFF"/><path d="M10.5 7 H4.5 M7 4 L4 7 L7 10" fill="none" stroke="#2D2D30" stroke-width="1.6"/></svg>
<svg class="b" style="left:45.5px;top:45px;" width="7" height="3.5" viewBox="0 0 7 3.5"><path d="M0 0 H7 L3.5 3.5 Z" fill="#A8A8A8"/></svg>
<svg class="b" style="left:59px;top:39px;" width="14" height="14" viewBox="0 0 14 14"><circle cx="7" cy="7" r="6.5" fill="#555558"/><path d="M3.5 7 H9.5 M7 4 L10 7 L7 10" fill="none" stroke="#2D2D30" stroke-width="1.6"/></svg>
<svg class="b" style="left:89px;top:38px;" width="16" height="16" viewBox="0 0 16 16"><path d="M5.5 2.8 H10.5 L13.5 5.8 V12.5 H12.5 M2.5 9 V12.5 H4" fill="none" stroke="#B8B8B8" stroke-width="1.1"/><path d="M5.6 6.5 H10.3 L13 9.2 V14.6 H5.6 Z" fill="#2D2D30" stroke="#E8E8E8" stroke-width="1.1"/><path d="M4.5 1 V8.2 M0.9 4.6 H8.1 M2 2.1 L7 7.1 M7 2.1 L2 7.1" stroke="#F5D28A" stroke-width="1.1"/><circle cx="4.5" cy="4.6" r="1.1" fill="#2D2D30"/></svg>
<svg class="b" style="left:110.5px;top:45px;" width="7" height="3.5" viewBox="0 0 7 3.5"><path d="M0 0 H7 L3.5 3.5 Z" fill="#A8A8A8"/></svg>
<svg class="b" style="left:123px;top:38px;" width="16" height="16" viewBox="0 0 16 16"><path d="M7.5 6.8 H14.2 V10 H7.5 Z" fill="#3A3426" stroke="#D8AB5A" stroke-width="1"/><path d="M1.2 9.6 H15.2 L13.8 15.8 H1.2 Z" fill="#D8AB5A"/><path d="M2.6 9.5 C2.4 6 4.5 4.2 8 4.2 M6.2 1.2 L9.3 4.2 L6.2 7.2" fill="none" stroke="#75BEFF" stroke-width="1.7"/></svg>
<svg class="b" style="left:146.5px;top:40px;" width="13" height="12" viewBox="0 0 13 12"><path d="M0.3 0 H10.8 L12.6 1.8 V12 H0.3 Z" fill="#75BEFF"/><rect x="3.4" y="0" width="6" height="4.6" fill="#2D2D30"/><rect x="6.6" y="0.6" width="1.7" height="2.8" fill="#75BEFF"/></svg>
<svg class="b" style="left:167px;top:38px;" width="16" height="16" viewBox="0 0 16 16"><path d="M6.5 0.5 H13 L14.8 2.2 V8.5 H6.5 Z" fill="#75BEFF"/><rect x="8.5" y="0.5" width="4" height="3" fill="#2D2D30"/><path d="M0.8 6.5 H7.5 L9.5 8.3 V15 H0.8 Z" fill="#75BEFF" stroke="#2D2D30" stroke-width="0.8"/><rect x="2.8" y="6.8" width="4" height="3" fill="#2D2D30"/></svg>
<svg class="b" style="left:198px;top:38px;" width="16" height="16" viewBox="0 0 16 16"><path d="M2.2 2.5 V7 H7" fill="none" stroke="#75BEFF" stroke-width="1.8"/><path d="M2.5 6.5 C6 2 12.5 3 12.5 7.5 C12.5 10.5 10 12.5 7 15" fill="none" stroke="#75BEFF" stroke-width="1.9"/></svg>
<svg class="b" style="left:219.5px;top:45px;" width="7" height="3.5" viewBox="0 0 7 3.5"><path d="M0 0 H7 L3.5 3.5 Z" fill="#A8A8A8"/></svg>
<svg class="b" style="left:233px;top:38px;" width="16" height="16" viewBox="0 0 16 16"><path d="M13.8 2.5 V7 H9" fill="none" stroke="#555558" stroke-width="1.8"/><path d="M13.5 6.5 C10 2 3.5 3 3.5 7.5 C3.5 10.5 6 12.5 9 15" fill="none" stroke="#555558" stroke-width="1.9"/></svg>
<svg class="b" style="left:254.5px;top:45px;" width="7" height="3.5" viewBox="0 0 7 3.5"><path d="M0 0 H7 L3.5 3.5 Z" fill="#555558"/></svg>
<svg class="b" style="left:329.2px;top:45px;" width="7" height="3.5" viewBox="0 0 7 3.5"><path d="M0 0 H7 L3.5 3.5 Z" fill="#999999"/></svg>
<svg class="b" style="left:445.2px;top:45px;" width="7" height="3.5" viewBox="0 0 7 3.5"><path d="M0 0 H7 L3.5 3.5 Z" fill="#999999"/></svg>
<svg class="b" style="left:466.5px;top:40px;" width="9.5" height="12" viewBox="0 0 9.5 12"><path d="M0.4 0.4 L9 6 L0.4 11.6 Z" fill="#86D486"/><path d="M2.5 4 L5.5 6 L2.5 8 Z" fill="#6BB86B"/></svg>
<svg class="b" style="left:512.5px;top:45px;" width="7" height="3.5" viewBox="0 0 7 3.5"><path d="M0 0 H7 L3.5 3.5 Z" fill="#A8A8A8"/></svg>
<svg class="b" style="left:527px;top:39px;" width="12" height="14" viewBox="0 0 12 14"><path d="M6 0.5 C8 3 11 5.5 11 9 C11 12 9 13.5 6 13.5 C3 13.5 1 12 1 9 C1 7 2.5 5.5 3.5 4 C4 6 5 6.5 5.5 6.5 C6.5 4.5 6.2 2.5 6 0.5 Z" fill="#4A4A4E"/></svg>
<svg class="b" style="left:555px;top:38px;" width="16" height="16" viewBox="0 0 16 16"><path d="M0.5 2.5 H6 L7.5 4 H13.5 V13.5 H0.5 Z" fill="#D8AB5A"/><circle cx="11" cy="10.5" r="2.8" fill="#2D2D30" stroke="#75BEFF" stroke-width="1.4"/><path d="M13 12.5 L15.5 15.2" stroke="#75BEFF" stroke-width="1.6"/></svg>
<svg class="b" style="left:585px;top:38px;" width="16" height="16" viewBox="0 0 16 16"><rect x="0.5" y="2.5" width="15" height="11" fill="none" stroke="#D0D0D0"/><path d="M4.5 9 L8 5.5 L11.5 9 M5.5 8.5 V12 H10.5 V8.5" fill="none" stroke="#75BEFF" stroke-width="1.3"/></svg>
<svg class="b" style="left:607px;top:49px;" width="8" height="7" viewBox="0 0 8 7"><rect x="0.5" y="0" width="7" height="1.2" fill="#C8C8C8"/><path d="M1 3 H7 L4 6.5 Z" fill="#C8C8C8"/></svg>
<svg class="b" style="left:631px;top:38px;" width="16" height="16" viewBox="0 0 16 16"><path d="M0.5 0.5 L0.5 9 L2.7 7 L5.8 7 Z" fill="#75BEFF"/><path d="M3 7.5 H14 V13.8 H2.5 V9" fill="none" stroke="#D0D0D0" stroke-width="1.1"/><rect x="5" y="10" width="6.5" height="1.2" fill="#D0D0D0"/></svg>
<svg class="b" style="left:653px;top:38px;" width="16" height="16" viewBox="0 0 16 16"><path d="M3.5 2.5 H1 V12.5 H3.5" fill="none" stroke="#75BEFF" stroke-width="1.4"/><path d="M5 1.5 H15 M8 4.5 H15 M8 7.5 H15 M8 10.5 H15 M8 13.5 H15" stroke="#D0D0D0" stroke-width="1.2"/><rect x="5" y="3.5" width="1.2" height="11" fill="#D0D0D0"/></svg>
<svg class="b" style="left:683px;top:38px;" width="14" height="16" viewBox="0 0 14 16"><path d="M2 3.5 H4.5 M4 12 H12" stroke="#D0D0D0" stroke-width="1.2"/><path d="M5.5 3.5 H12 M5.5 6.3 H12 M5.5 9.1 H12" stroke="#8FD08F" stroke-width="1.2"/></svg>
<svg class="b" style="left:704px;top:38px;" width="16" height="16" viewBox="0 0 16 16"><path d="M1 2 C4 0.5 6 2 5.5 4 C5 5.5 3 6 2.5 7.5 M0.8 5.5 L2.5 8 L5 6.5" fill="none" stroke="#75BEFF" stroke-width="1.4"/><path d="M7.5 4.5 H14.5 M7.5 7.5 H14.5 M4.5 10.5 H14.5 M4.5 13.5 H14.5" stroke="#D0D0D0" stroke-width="1.2"/></svg>
<svg class="b" style="left:736px;top:38.6px;" width="11.4" height="13.6" viewBox="0 0 11.4 13.6"><path d="M0 0 H11.4 V13.6 L5.7 9.6 L0 13.6 Z" fill="#C8C8C8"/></svg>
<svg class="b" style="left:759px;top:38px;" width="14" height="15" viewBox="0 0 14 15"><path d="M4.7 2.6 H11 V12.6 L7.85 10.4 L4.7 12.6 Z" fill="#4E4E52"/><path d="M0.5 4.4 H6.5 M3 2.2 L0.8 4.4 L3 6.6" fill="none" stroke="#58585C" stroke-width="1.3"/></svg>
<svg class="b" style="left:780px;top:38px;" width="14" height="15" viewBox="0 0 14 15"><path d="M4.7 2.6 H11 V12.6 L7.85 10.4 L4.7 12.6 Z" fill="#4E4E52"/><path d="M0.5 4.4 H6.5 M3 2.2 L0.8 4.4 L3 6.6" fill="none" stroke="#58585C" stroke-width="1.3"/></svg>
<svg class="b" style="left:801px;top:38px;" width="14" height="15" viewBox="0 0 14 15"><path d="M4.7 2.6 H11 V12.6 L7.85 10.4 L4.7 12.6 Z" fill="#4E4E52"/><path d="M0.5 4.4 H6.5 M3 2.2 L0.8 4.4 L3 6.6" fill="none" stroke="#58585C" stroke-width="1.3"/></svg>
<svg class="b" style="left:822px;top:49px;" width="8" height="7" viewBox="0 0 8 7"><rect x="0.5" y="0" width="7" height="1.2" fill="#C8C8C8"/><path d="M1 3 H7 L4 6.5 Z" fill="#C8C8C8"/></svg>
<svg class="b" style="left:1707px;top:41px;" width="16" height="15" viewBox="0 0 16 15"><path d="M3 5.5 H0.7 V14 H11.5 V11" fill="none" stroke="#D0D0D0" stroke-width="1.2"/><path d="M3.5 10.5 C4 6.5 6.5 5 9 5 V2 L14.3 6.5 L9 11 V8 C6.5 8 5 8.8 3.5 10.5 Z" fill="none" stroke="#D0D0D0" stroke-width="1.2"/></svg>
<svg class="b" style="left:1805px;top:38px;" width="17" height="16" viewBox="0 0 17 16"><path d="M6 4.5 V1 H15.5 V7.5 H12 L10 9.5 V7.5" fill="none" stroke="#D0D0D0" stroke-width="1.1"/><circle cx="6" cy="8.5" r="2.7" fill="none" stroke="#D0D0D0" stroke-width="1.2"/><path d="M1 15 C2 11.5 4 11 6 11 C8 11 10 11.5 11 15" fill="none" stroke="#D0D0D0" stroke-width="1.2"/></svg>
<svg class="b" style="left:132px;top:81px;" width="108" height="5" viewBox="0 0 108 5"><rect x="0" y="0" width="1" height="1" fill="#46464A"/><rect x="4" y="0" width="1" height="1" fill="#46464A"/><rect x="8" y="0" width="1" height="1" fill="#46464A"/><rect x="12" y="0" width="1" height="1" fill="#46464A"/><rect x="16" y="0" width="1" height="1" fill="#46464A"/><rect x="20" y="0" width="1" height="1" fill="#46464A"/><rect x="24" y="0" width="1" height="1" fill="#46464A"/><rect x="28" y="0" width="1" height="1" fill="#46464A"/><rect x="32" y="0" width="1" height="1" fill="#46464A"/><rect x="36" y="0" width="1" height="1" fill="#46464A"/><rect x="40" y="0" width="1" height="1" fill="#46464A"/><rect x="44" y="0" width="1" height="1" fill="#46464A"/><rect x="48" y="0" width="1" height="1" fill="#46464A"/><rect x="52" y="0" width="1" height="1" fill="#46464A"/><rect x="56" y="0" width="1" height="1" fill="#46464A"/><rect x="60" y="0" width="1" height="1" fill="#46464A"/><rect x="64" y="0" width="1" height="1" fill="#46464A"/><rect x="68" y="0" width="1" height="1" fill="#46464A"/><rect x="72" y="0" width="1" height="1" fill="#46464A"/><rect x="76" y="0" width="1" height="1" fill="#46464A"/><rect x="80" y="0" width="1" height="1" fill="#46464A"/><rect x="84" y="0" width="1" height="1" fill="#46464A"/><rect x="88" y="0" width="1" height="1" fill="#46464A"/><rect x="92" y="0" width="1" height="1" fill="#46464A"/><rect x="96" y="0" width="1" height="1" fill="#46464A"/><rect x="100" y="0" width="1" height="1" fill="#46464A"/><rect x="104" y="0" width="1" height="1" fill="#46464A"/><rect x="2" y="2" width="1" height="1" fill="#46464A"/><rect x="6" y="2" width="1" height="1" fill="#46464A"/><rect x="10" y="2" width="1" height="1" fill="#46464A"/><rect x="14" y="2" width="1" height="1" fill="#46464A"/><rect x="18" y="2" width="1" height="1" fill="#46464A"/><rect x="22" y="2" width="1" height="1" fill="#46464A"/><rect x="26" y="2" width="1" height="1" fill="#46464A"/><rect x="30" y="2" width="1" height="1" fill="#46464A"/><rect x="34" y="2" width="1" height="1" fill="#46464A"/><rect x="38" y="2" width="1" height="1" fill="#46464A"/><rect x="42" y="2" width="1" height="1" fill="#46464A"/><rect x="46" y="2" width="1" height="1" fill="#46464A"/><rect x="50" y="2" width="1" height="1" fill="#46464A"/><rect x="54" y="2" width="1" height="1" fill="#46464A"/><rect x="58" y="2" width="1" height="1" fill="#46464A"/><rect x="62" y="2" width="1" height="1" fill="#46464A"/><rect x="66" y="2" width="1" height="1" fill="#46464A"/><rect x="70" y="2" width="1" height="1" fill="#46464A"/><rect x="74" y="2" width="1" height="1" fill="#46464A"/><rect x="78" y="2" width="1" height="1" fill="#46464A"/><rect x="82" y="2" width="1" height="1" fill="#46464A"/><rect x="86" y="2" width="1" height="1" fill="#46464A"/><rect x="90" y="2" width="1" height="1" fill="#46464A"/><rect x="94" y="2" width="1" height="1" fill="#46464A"/><rect x="98" y="2" width="1" height="1" fill="#46464A"/><rect x="102" y="2" width="1" height="1" fill="#46464A"/><rect x="106" y="2" width="1" height="1" fill="#46464A"/><rect x="0" y="4" width="1" height="1" fill="#46464A"/><rect x="4" y="4" width="1" height="1" fill="#46464A"/><rect x="8" y="4" width="1" height="1" fill="#46464A"/><rect x="12" y="4" width="1" height="1" fill="#46464A"/><rect x="16" y="4" width="1" height="1" fill="#46464A"/><rect x="20" y="4" width="1" height="1" fill="#46464A"/><rect x="24" y="4" width="1" height="1" fill="#46464A"/><rect x="28" y="4" width="1" height="1" fill="#46464A"/><rect x="32" y="4" width="1" height="1" fill="#46464A"/><rect x="36" y="4" width="1" height="1" fill="#46464A"/><rect x="40" y="4" width="1" height="1" fill="#46464A"/><rect x="44" y="4" width="1" height="1" fill="#46464A"/><rect x="48" y="4" width="1" height="1" fill="#46464A"/><rect x="52" y="4" width="1" height="1" fill="#46464A"/><rect x="56" y="4" width="1" height="1" fill="#46464A"/><rect x="60" y="4" width="1" height="1" fill="#46464A"/><rect x="64" y="4" width="1" height="1" fill="#46464A"/><rect x="68" y="4" width="1" height="1" fill="#46464A"/><rect x="72" y="4" width="1" height="1" fill="#46464A"/><rect x="76" y="4" width="1" height="1" fill="#46464A"/><rect x="80" y="4" width="1" height="1" fill="#46464A"/><rect x="84" y="4" width="1" height="1" fill="#46464A"/><rect x="88" y="4" width="1" height="1" fill="#46464A"/><rect x="92" y="4" width="1" height="1" fill="#46464A"/><rect x="96" y="4" width="1" height="1" fill="#46464A"/><rect x="100" y="4" width="1" height="1" fill="#46464A"/><rect x="104" y="4" width="1" height="1" fill="#46464A"/></svg>
<svg class="b" style="left:247px;top:81px;" width="9" height="4.5" viewBox="0 0 9 4.5"><path d="M0 0 H9 L4.5 4.5 Z" fill="#F1F1F1"/></svg>
<svg class="b" style="left:263px;top:77px;" width="10" height="12" viewBox="0 0 10 12"><path d="M3 0.5 H7.5 V6.5 M3.5 0.5 V6.5 M6.5 0.5 V6.5 M1 6.5 H9.5 M5.2 6.5 V11.5" fill="none" stroke="#F1F1F1" stroke-width="1.1"/></svg>
<svg class="b" style="left:280px;top:78px;" width="10" height="10" viewBox="0 0 10 10"><path d="M0.7 0.7 L9.3 9.3 M9.3 0.7 L0.7 9.3" stroke="#F1F1F1" stroke-width="1.5"/></svg>
<svg class="b" style="left:41px;top:102px;" width="12" height="12" viewBox="0 0 12 12"><circle cx="6" cy="6" r="5.8" fill="#4A4A4E"/><path d="M9 6 H3.5 M6 3.2 L3.2 6 L6 8.8" fill="none" stroke="#2D2D30" stroke-width="1.5"/></svg>
<svg class="b" style="left:63px;top:102px;" width="12" height="12" viewBox="0 0 12 12"><circle cx="6" cy="6" r="5.8" fill="#4A4A4E"/><path d="M3 6 H8.5 M6 3.2 L8.8 6 L6 8.8" fill="none" stroke="#2D2D30" stroke-width="1.5"/></svg>
<svg class="b" style="left:83px;top:100px;" width="15" height="16" viewBox="0 0 15 16"><path d="M0.8 8 L7.5 1.2 L14.2 8 M2.5 7.5 V14.5 H6 V10 H9 V14.5 H12.5 V7.5 M11 4 V1.5" fill="none" stroke="#D0D0D0" stroke-width="1.3"/></svg>
<svg class="b" style="left:105px;top:100px;" width="16" height="16" viewBox="0 0 16 16"><path d="M5.5 3.5 V1 H14.5 V12.5 H9" fill="none" stroke="#D0D0D0" stroke-width="1.1"/><path d="M8 4.5 H12.5 M8 7 H12.5 M9 9.5 H12.5" stroke="#D0D0D0"/><path d="M5.2 6 L7.5 7 V14 L5.2 15 L2.5 12 L1.2 13 L0.5 12.5 V8.5 L1.2 8 L2.5 9 Z M5.3 8.8 L3.6 10.5 L5.3 12.2 Z" fill="#8A4FD8" fill-rule="evenodd"/></svg>
<div class="b" style="left:128px;top:98px;width:1px;height:20px;background:#46464A;"></div>
<svg class="b" style="left:138px;top:99px;" width="14" height="16" viewBox="0 0 14 16"><path d="M0.3 2 H5.7 L3.6 4.2 V6 H2.4 V4.2 Z" fill="#D0D0D0"/><circle cx="8" cy="10.7" r="4.6" fill="none" stroke="#D0D0D0" stroke-width="1.2"/><path d="M8 8.2 V10.9 H10.5" fill="none" stroke="#D0D0D0" stroke-width="1.1"/></svg>
<svg class="b" style="left:157.5px;top:106px;" width="7" height="3.5" viewBox="0 0 7 3.5"><path d="M0 0 H7 L3.5 3.5 Z" fill="#999999"/></svg>
<svg class="b" style="left:170px;top:100px;" width="15" height="15" viewBox="0 0 15 15"><path d="M2.2 7 C2.2 4 4.5 2.5 7 2.5 H11.5 M9 0.3 L12 2.6 L9 5" fill="none" stroke="#75BEFF" stroke-width="1.9"/><path d="M12.8 8 C12.8 11 10.5 12.5 8 12.5 H3.5 M6 10 L3 12.4 L6 14.7" fill="none" stroke="#75BEFF" stroke-width="1.9"/></svg>
<svg class="b" style="left:193px;top:100px;" width="14" height="15" viewBox="0 0 14 15"><path d="M11.6 6.2 A5.2 5.2 0 1 1 7 3.2" fill="none" stroke="#75BEFF" stroke-width="1.9"/><path d="M6 0.2 L10 3.2 L6.3 6.2 Z" fill="#75BEFF"/></svg>
<svg class="b" style="left:216px;top:101px;" width="13" height="13" viewBox="0 0 13 13"><path d="M4.5 3 V0.8 H11.5 V6.5 H9.8" fill="none" stroke="#D0D0D0"/><path d="M2.5 5.5 V3.2 H9.5 V9 H8" fill="none" stroke="#D0D0D0"/><rect x="0.5" y="5.8" width="7" height="6" fill="#2D2D30" stroke="#D0D0D0"/><rect x="2.2" y="8.3" width="3.6" height="1.2" fill="#75BEFF"/></svg>
<svg class="b" style="left:236.2px;top:100.4px;" width="15.5" height="16" viewBox="0 0 15.5 16"><path d="M6.3 1 H0.9 V10 H2.6" fill="none" stroke="#D0D0D0" stroke-width="1.2"/><path d="M7.5 2.8 H11.5 L14.4 5.5 V12.6 H13.2" fill="none" stroke="#D0D0D0" stroke-width="1.2"/><path d="M4.3 4.6 H9.3 L12 7.2 V14.8 H4.3 Z" fill="#2D2D30" stroke="#D0D0D0" stroke-width="1.2"/><path d="M6 8.2 H8.5 M6 10.4 H10.3 M6 12.6 H10.3" stroke="#D0D0D0" stroke-width="1"/></svg>
<div class="b" style="left:259px;top:98px;width:1px;height:20px;background:#46464A;"></div>
<svg class="b" style="left:288px;top:98px;" width="7" height="4" viewBox="0 0 7 4"><path d="M0 0 L2.4 2 L0 4 Z M4 0 L6.4 2 L4 4 Z" fill="#8A8A8A"/></svg>
<svg class="b" style="left:268px;top:125px;" width="13" height="14" viewBox="0 0 13 14"><circle cx="8" cy="5" r="3.4" fill="none" stroke="#F1F1F1" stroke-width="1.7"/><path d="M5.6 7.4 L1.2 12" stroke="#F1F1F1" stroke-width="2.2"/></svg>
<div class="b" style="left:283px;top:123px;width:12px;height:19px;background:#2D2D30;"></div>
<svg class="b" style="left:285.5px;top:131px;" width="7" height="3.5" viewBox="0 0 7 3.5"><path d="M0 0 H7 L3.5 3.5 Z" fill="#D0D0D0"/></svg>
<svg class="b" style="left:43px;top:169px;" width="7" height="7" viewBox="0 0 7 7"><path d="M6.5 0.5 V6.5 H0.5 Z" fill="#F1F1F1"/></svg>
<svg class="b" style="left:61px;top:186px;" width="6" height="10" viewBox="0 0 6 10"><path d="M0.6 0.8 L5.2 5 L0.6 9.2 Z" fill="none" stroke="#F1F1F1" stroke-width="1"/></svg>
<svg class="b" style="left:61px;top:204px;" width="6" height="10" viewBox="0 0 6 10"><path d="M0.6 0.8 L5.2 5 L0.6 9.2 Z" fill="none" stroke="#F1F1F1" stroke-width="1"/></svg>
<svg class="b" style="left:61px;top:223px;" width="7" height="7" viewBox="0 0 7 7"><path d="M6.5 0.5 V6.5 H0.5 Z" fill="#F1F1F1"/></svg>
<svg class="b" style="left:79px;top:241px;" width="7" height="7" viewBox="0 0 7 7"><path d="M6.5 0.5 V6.5 H0.5 Z" fill="#F1F1F1"/></svg>
<svg class="b" style="left:97px;top:258px;" width="6" height="10" viewBox="0 0 6 10"><path d="M0.6 0.8 L5.2 5 L0.6 9.2 Z" fill="none" stroke="#F1F1F1" stroke-width="1"/></svg>
<svg class="b" style="left:61px;top:276px;" width="6" height="10" viewBox="0 0 6 10"><path d="M0.6 0.8 L5.2 5 L0.6 9.2 Z" fill="none" stroke="#F1F1F1" stroke-width="1"/></svg>
<svg class="b" style="left:61px;top:295px;" width="7" height="7" viewBox="0 0 7 7"><path d="M6.5 0.5 V6.5 H0.5 Z" fill="#F1F1F1"/></svg>
<svg class="b" style="left:79px;top:330px;" width="6" height="10" viewBox="0 0 6 10"><path d="M0.6 0.8 L5.2 5 L0.6 9.2 Z" fill="none" stroke="#F1F1F1" stroke-width="1"/></svg>
<svg class="b" style="left:79px;top:348px;" width="6" height="10" viewBox="0 0 6 10"><path d="M0.6 0.8 L5.2 5 L0.6 9.2 Z" fill="none" stroke="#F1F1F1" stroke-width="1"/></svg>
<svg class="b" style="left:79px;top:385px;" width="7" height="7" viewBox="0 0 7 7"><path d="M6.5 0.5 V6.5 H0.5 Z" fill="#F1F1F1"/></svg>
<svg class="b" style="left:97px;top:403px;" width="7" height="7" viewBox="0 0 7 7"><path d="M6.5 0.5 V6.5 H0.5 Z" fill="#F1F1F1"/></svg>
<svg class="b" style="left:115px;top:420px;" width="6" height="10" viewBox="0 0 6 10"><path d="M0.6 0.8 L5.2 5 L0.6 9.2 Z" fill="none" stroke="#F1F1F1" stroke-width="1"/></svg>
<svg class="b" style="left:46px;top:147px;" width="16" height="16" viewBox="0 0 16 16"><path d="M1.4 2 V8 M1 2 H15 M14.4 2 V12.9 H9.8" fill="none" stroke="#C8C8C8" stroke-width="1.2"/><rect x="0.8" y="1" width="14.2" height="2" fill="#C8C8C8"/><path d="M6 7.2 L8.2 8 V14.6 L6 15.4 L2.8 12.3 L1.5 13.4 L0.6 12.9 V9.6 L1.5 9.1 L2.8 10.2 Z M6.1 9.7 L4.4 11.3 L6.1 12.9 Z" fill="#8A4FD8" fill-rule="evenodd"/></svg>
<svg class="b" style="left:64px;top:165px;" width="16" height="16" viewBox="0 0 16 16"><path d="M6 2.5 H15 V12.5 H8" fill="none" stroke="#C8C8C8" stroke-width="1.1"/><path d="M6 2.8 H15" stroke="#C8C8C8" stroke-width="1.8"/><path d="M0 3 L8 1.5 V15 L0 13.5 Z" fill="#2A7BC8"/><path d="M5.8 5.8 C4.5 4.8 2.6 5.2 2.6 6.6 C2.6 8.2 5.6 8 5.6 9.8 C5.6 11.2 3.6 11.4 2.3 10.5" fill="none" stroke="#FFFFFF" stroke-width="1.3"/></svg>
<svg class="b" style="left:82px;top:183px;" width="16" height="16" viewBox="0 0 16 16"><path d="M2.6 13.4 L8.6 7.6" stroke="#C4C4C4" stroke-width="3.1" stroke-linecap="round"/><circle cx="10.4" cy="5.5" r="4.5" fill="#C4C4C4"/><path d="M11.2 5 L13.6 2.6 L16 5 L13.6 7.4 Z" fill="#252526" transform="translate(-1.2 -1.6)"/></svg>
<svg class="b" style="left:82px;top:201px;" width="16" height="16" viewBox="0 0 16 16"><rect x="4" y="4" width="2.9" height="3" fill="#C4C4C4"/><rect x="7.9" y="5" width="2.2" height="1" fill="#C4C4C4"/><rect x="11" y="3" width="4.1" height="4.9" fill="#C4C4C4"/><rect x="1" y="9" width="3" height="3" fill="#C4C4C4"/><rect x="4.9" y="10" width="2" height="1" fill="#C4C4C4"/><rect x="7.9" y="8" width="4.4" height="5" fill="#C4C4C4"/></svg>
<svg class="b" style="left:82px;top:219px;" width="16" height="16" viewBox="0 0 16 16"><path d="M2.6 6 V4.7 H5 L6 2.8 H14.6 V12.8" fill="none" stroke="#DCB67A" stroke-width="1.1"/><path d="M0.8 9.8 L4.3 6.3 H12 L13.6 12.9 H2.3 Z" fill="#DCB67A"/></svg>
<svg class="b" style="left:100px;top:237px;" width="16" height="16" viewBox="0 0 16 16"><path d="M7 1 H12 L15 4 V13.5 H8" fill="none" stroke="#C8C8C8" stroke-width="1.1"/><path d="M11.5 1 V4.5 H15" fill="none" stroke="#C8C8C8"/><path d="M9.5 7.5 H13 M9.5 9.5 H13 M9.5 11.5 H13" stroke="#C8C8C8" stroke-width="0.9"/><path d="M0 3 L8 1.5 V15 L0 13.5 Z" fill="#2A7BC8"/><path d="M5.8 5.8 C4.5 4.8 2.6 5.2 2.6 6.6 C2.6 8.2 5.6 8 5.6 9.8 C5.6 11.2 3.6 11.4 2.3 10.5" fill="none" stroke="#FFFFFF" stroke-width="1.3"/></svg>
<svg class="b" style="left:118px;top:255px;" width="16" height="16" viewBox="0 0 16 16"><path d="M7 1 H12 L15 4 V13.5 H8" fill="none" stroke="#C8C8C8" stroke-width="1.1"/><path d="M11.5 1 V4.5 H15" fill="none" stroke="#C8C8C8"/><path d="M9.5 7.5 H13 M9.5 9.5 H13 M9.5 11.5 H13" stroke="#C8C8C8" stroke-width="0.9"/><path d="M0 3 L8 1.5 V15 L0 13.5 Z" fill="#2A7BC8"/><path d="M5.8 5.8 C4.5 4.8 2.6 5.2 2.6 6.6 C2.6 8.2 5.6 8 5.6 9.8 C5.6 11.2 3.6 11.4 2.3 10.5" fill="none" stroke="#FFFFFF" stroke-width="1.3"/></svg>
<svg class="b" style="left:83px;top:273px;" width="15" height="16" viewBox="0 0 15 16"><path d="M0.5 1.8 H6 L7.5 3.3 H14.5 V14 H0.5 Z" fill="#DCB67A"/></svg>
<svg class="b" style="left:82px;top:291px;" width="16" height="16" viewBox="0 0 16 16"><circle cx="8" cy="7" r="6" fill="none" stroke="#C8C8C8" stroke-width="1.1"/><path d="M8 1 V13 M2 7 H14 M8 1 C4.5 4 4.5 10 8 13 M8 1 C11.5 4 11.5 10 8 13" fill="none" stroke="#C8C8C8" stroke-width="0.9"/><rect x="0.8" y="8.8" width="8" height="6" fill="#252526" stroke="#C8C8C8" stroke-width="1.1"/><rect x="2.5" y="11" width="2" height="2" fill="#C8C8C8"/><rect x="5.5" y="11" width="2" height="2" fill="#C8C8C8"/></svg>
<svg class="b" style="left:100px;top:309px;" width="16" height="16" viewBox="0 0 16 16"><path d="M4.5 8 V1 H10.5 L14 4.5 V14.5 H9" fill="none" stroke="#C8C8C8" stroke-width="1.1"/><path d="M2 10 L0.5 12 L2 14 M8 10 L9.5 12 L8 14" fill="none" stroke="#C8C8C8"/><rect x="3" y="10.5" width="4" height="3.5" fill="#C8C8C8"/></svg>
<svg class="b" style="left:102px;top:327px;" width="16" height="16" viewBox="0 0 16 16"><text x="0.7" y="11.6" font-family="Liberation Sans, sans-serif" font-weight="bold" font-size="10" fill="#7CC87C" textLength="11.3" lengthAdjust="spacingAndGlyphs">C#</text></svg>
<svg class="b" style="left:102px;top:345px;" width="16" height="16" viewBox="0 0 16 16"><text x="0.7" y="11.6" font-family="Liberation Sans, sans-serif" font-weight="bold" font-size="10" fill="#7CC87C" textLength="11.3" lengthAdjust="spacingAndGlyphs">C#</text></svg>
<svg class="b" style="left:100px;top:363px;" width="16" height="16" viewBox="0 0 16 16"><circle cx="8" cy="7" r="6" fill="none" stroke="#C8C8C8" stroke-width="1.1"/><path d="M8 1 V13 M2 7 H14 M8 1 C4.5 4 4.5 10 8 13 M8 1 C11.5 4 11.5 10 8 13" fill="none" stroke="#C8C8C8" stroke-width="0.9"/><rect x="0.8" y="8.8" width="8" height="6" fill="#252526" stroke="#C8C8C8" stroke-width="1.1"/><rect x="2.5" y="11" width="2" height="2" fill="#C8C8C8"/><rect x="5.5" y="11" width="2" height="2" fill="#C8C8C8"/></svg>
<svg class="b" style="left:100px;top:381px;" width="16" height="16" viewBox="0 0 16 16"><circle cx="5.5" cy="10.5" r="4.6" fill="#2A8FE0"/><path d="M5.5 6 V15 M1 10.5 H10 M5.5 6 C3 8 3 13 5.5 15 M5.5 6 C8 8 8 13 5.5 15" fill="none" stroke="#1E1E1E" stroke-width="0.7"/><circle cx="11.5" cy="3.5" r="2.3" fill="#C8C8C8"/><path d="M8.5 12 V8.5 C8.5 6.5 14.5 6.5 14.5 8.5 V12 Z" fill="#C8C8C8"/></svg>
<svg class="b" style="left:118px;top:399px;" width="16" height="16" viewBox="0 0 16 16"><path d="M3.5 8 V14.5 H12.5 V5 L9.5 2 H8" fill="none" stroke="#C8C8C8" stroke-width="1.1"/><path d="M0.5 3.5 H5.5 M3.5 1 L6 3.5 L3.5 6" fill="none" stroke="#3FA9F5" stroke-width="1.6"/></svg>
<svg class="b" style="left:136px;top:417px;" width="16" height="16" viewBox="0 0 16 16"><path d="M3.5 8 V14.5 H12.5 V5 L9.5 2 H8" fill="none" stroke="#C8C8C8" stroke-width="1.1"/><path d="M0.5 3.5 H5.5 M3.5 1 L6 3.5 L3.5 6" fill="none" stroke="#3FA9F5" stroke-width="1.6"/></svg>
<svg class="b" style="left:82px;top:435px;" width="16" height="16" viewBox="0 0 16 16"><rect x="1" y="2.5" width="14" height="9" fill="none" stroke="#C8C8C8" stroke-width="1.1" stroke-dasharray="2 1"/><circle cx="4.5" cy="7" r="2.5" fill="#252526" stroke="#C8C8C8" stroke-width="1.1"/><path d="M3 9 V14.5 L4.5 13.5 L6 14.5 V9" fill="#252526" stroke="#C8C8C8"/><path d="M9 6 H13 M9 8.5 H13" stroke="#C8C8C8"/></svg>
<svg class="b" style="left:82px;top:453px;" width="16" height="16" viewBox="0 0 16 16"><path d="M5.5 4 V1 H10.5 L13.5 4 V14.5 H5.5 V12" fill="none" stroke="#C8C8C8" stroke-width="1.1"/><path d="M0.8 14.5 L3.2 10" stroke="#C8C8C8" stroke-width="2.2"/><path d="M5.2 4.3 A2.8 2.8 0 1 0 6.8 7.3 L5 8 L3.8 6.5 Z" fill="#C8C8C8"/></svg>
<svg class="b" style="left:38px;top:952px;" width="5" height="9" viewBox="0 0 5 9"><path d="M5 0 V9 L0 4.5 Z" fill="#999"/></svg>
<svg class="b" style="left:285px;top:952px;" width="5" height="9" viewBox="0 0 5 9"><path d="M0 0 V9 L5 4.5 Z" fill="#999"/></svg>
<svg class="b" style="left:507px;top:79.3px;" width="10" height="9" viewBox="0 0 10 9"><path d="M3 4.5 H0.5 M3 1 V8 M3 2.5 H8 V6.5 H3 M3 6 H8" fill="none" stroke="#FFFFFF" stroke-width="1"/></svg>
<svg class="b" style="left:525.3px;top:78.7px;" width="9" height="9" viewBox="0 0 9 9"><path d="M0.7 0.7 L8.3 8.3 M8.3 0.7 L0.7 8.3" stroke="#FFFFFF" stroke-width="1.4"/></svg>
<svg class="b" style="left:1859.5px;top:81px;" width="9" height="4.5" viewBox="0 0 9 4.5"><path d="M0 0 H9 L4.5 4.5 Z" fill="#F1F1F1"/></svg>
<svg class="b" style="left:1876.5px;top:75.7px;" width="11" height="11" viewBox="0 0 12 12"><circle cx="6" cy="6" r="3.2" fill="none" stroke="#F1F1F1" stroke-width="2.2"/><path d="M6 0.3 V2 M6 10 V11.7 M0.3 6 H2 M10 6 H11.7 M2 2 L3.2 3.2 M8.8 8.8 L10 10 M10 2 L8.8 3.2 M2 10 L3.2 8.8" stroke="#F1F1F1" stroke-width="1.8"/></svg>
<svg class="b" style="left:307px;top:96px;" width="15" height="15" viewBox="0 0 15 15"><path d="M5 1.5 H14 V11 H8" fill="none" stroke="#C8C8C8" stroke-width="1.1"/><path d="M5 1.8 H14" stroke="#C8C8C8" stroke-width="1.8"/><path d="M0 2.5 L7.5 1.2 V14 L0 12.7 Z" fill="#2A7BC8"/><path d="M5.4 5.2 C4.2 4.3 2.4 4.7 2.4 6 C2.4 7.5 5.2 7.3 5.2 9 C5.2 10.3 3.4 10.5 2.1 9.7" fill="none" stroke="#FFFFFF" stroke-width="1.2"/></svg>
<svg class="b" style="left:832px;top:97px;" width="14" height="14" viewBox="0 0 14 14"><path d="M0.5 3.5 L4 0.5 L7.5 3.5 L4 6.5 Z" fill="#E8AB53"/><path d="M4 6.5 V10.5 H8 M4 4 H8.5" fill="none" stroke="#D0D0D0"/><rect x="8" y="2" width="4.5" height="4" fill="#E8AB53"/><rect x="8" y="8.5" width="4.5" height="4" fill="#E8AB53"/></svg>
<svg class="b" style="left:1353px;top:96px;" width="15" height="15" viewBox="0 0 15 15"><path d="M5.5 0.8 L10 3 V8 L5.5 10.5 L1 8 V3 Z" fill="none" stroke="#B180D7" stroke-width="1.3"/><path d="M1 3 L5.5 5.3 L10 3 M5.5 5.3 V10.5" fill="none" stroke="#B180D7" stroke-width="1"/><path d="M11 9 L12 11 L14 11.2 L12.5 12.6 L13 14.6 L11 13.5 L9 14.6 L9.5 12.6 L8 11.2 L10 11 Z" fill="#D0D0D0"/></svg>
<svg class="b" style="left:814px;top:102px;" width="7" height="3.5" viewBox="0 0 7 3.5"><path d="M0 0 H7 L3.5 3.5 Z" fill="#999"/></svg>
<svg class="b" style="left:1337px;top:102px;" width="7" height="3.5" viewBox="0 0 7 3.5"><path d="M0 0 H7 L3.5 3.5 Z" fill="#999"/></svg>
<svg class="b" style="left:1859px;top:102px;" width="7" height="3.5" viewBox="0 0 7 3.5"><path d="M0 0 H7 L3.5 3.5 Z" fill="#999"/></svg>
<svg class="b" style="left:1872px;top:96px;" width="14" height="16" viewBox="0 0 14 16"><path d="M0.5 8 H13.5 M7 1 V6 M7 10 V15 M4.5 3.5 L7 1 L9.5 3.5 M4.5 12.5 L7 15 L9.5 12.5" fill="none" stroke="#F1F1F1" stroke-width="1.2"/></svg>
<svg class="b" style="left:353.5px;top:975px;" width="7" height="3.5" viewBox="0 0 7 3.5"><path d="M0 0 H7 L3.5 3.5 Z" fill="#F1F1F1"/></svg>
<svg class="b" style="left:388px;top:971px;" width="12" height="12" viewBox="0 0 12 12"><circle cx="6" cy="6" r="5.6" fill="#2E9F4A" stroke="#E0E0E0" stroke-width="0.8"/><path d="M3.2 6.2 L5.2 8.2 L8.8 4" fill="none" stroke="#FFFFFF" stroke-width="1.5"/></svg>
<svg class="b" style="left:562px;top:970px;" width="12" height="13" viewBox="0 0 12 13"><path d="M8.5 0.5 L6.5 4 M3 4 L9.5 6.5 L8 10 L1 7.5 Z M2.5 8.5 L4 12 M5 9.5 L6 12" fill="none" stroke="#C8C8C8" stroke-width="1.2"/></svg>
<svg class="b" style="left:578px;top:975px;" width="7" height="3.5" viewBox="0 0 7 3.5"><path d="M0 0 H7 L3.5 3.5 Z" fill="#F1F1F1"/></svg>
<svg class="b" style="left:615px;top:972px;" width="5" height="9" viewBox="0 0 5 9"><path d="M5 0 V9 L0 4.5 Z" fill="#999"/></svg>
<svg class="b" style="left:1681px;top:972px;" width="5" height="9" viewBox="0 0 5 9"><path d="M0 0 V9 L5 4.5 Z" fill="#999"/></svg>
<svg class="b" style="left:4px;top:1024px;" width="17" height="11" viewBox="0 0 17 11"><path d="M3.5 0.8 H16 L13.5 10.2 H1 Z" fill="none" stroke="#FFFFFF" stroke-width="1.3"/></svg>
<svg class="b" style="left:1881px;top:1020px;" width="22" height="18" viewBox="0 0 22 18"><path d="M8 1.5 C11 1.5 12 4 12 6.5 C12 9 13 10 14 11 H2 C3 10 4 9 4 6.5 C4 4 5 1.5 8 1.5 Z" fill="#D0E4F5"/><rect x="6.5" y="11.5" width="3" height="2" fill="#D0E4F5"/><circle cx="15" cy="12" r="5.8" fill="#E51400"/><path d="M13.7 10.2 L15.4 9 V15" fill="none" stroke="#FFFFFF" stroke-width="1.3"/></svg>
<div class="b" style="left:175px;top:1041px;width:60px;height:38px;background:#7FD1EE;border-left:1px solid #3D6578;border-right:1px solid #3D6578;box-sizing:border-box;"></div>
<div class="b" style="left:237px;top:1041px;width:60px;height:38px;background:#7FD1EE;border-left:1px solid #3D6578;border-right:1px solid #3D6578;box-sizing:border-box;"></div>
<div class="b" style="left:299px;top:1041px;width:60px;height:38px;background:#7FD1EE;border-left:1px solid #3D6578;border-right:1px solid #3D6578;box-sizing:border-box;"></div>
<div class="b" style="left:361px;top:1041px;width:60px;height:38px;background:#A6DEF3;border-left:1px solid #3D6578;border-right:1px solid #3D6578;box-sizing:border-box;"></div>
<svg class="b" style="left:11px;top:1046px;" width="28" height="26" viewBox="0 0 28 26"><path d="M0 3.8 L11.5 2.2 V12.3 H0 Z M13 2 L27.5 0 V12.3 H13 Z M0 13.7 H11.5 V23.8 L0 22.2 Z M13 13.7 H27.5 V26 L13 24 Z" fill="#FFFFFF"/></svg>
<svg class="b" style="left:65px;top:1044px;" width="32" height="32" viewBox="0 0 32 32"><rect x="0.5" y="0.5" width="15" height="27.5" rx="0.8" fill="#1F8BE3" stroke="#FFFFFF"/><rect x="1" y="7.6" width="14" height="1.2" fill="#FFFFFF"/><rect x="5.8" y="18.6" width="25.6" height="12.8" rx="1.6" fill="#6F878D" stroke="#FFFFFF" stroke-width="1.1"/><path d="M15 18.2 V16.3 H22 V18.2 Z" fill="#6F878D" stroke="#E8F0F2" stroke-width="0.6"/><path d="M9.5 22.8 H27.5" stroke="#FFFFFF" stroke-width="1"/><circle cx="11" cy="22.8" r="1.4" fill="#FFF"/><circle cx="26" cy="22.8" r="1.4" fill="#FFF"/></svg>
<svg class="b" style="left:128px;top:1048px;" width="30" height="24" viewBox="0 0 30 24"><defs><linearGradient id="psg" x1="0" y1="0" x2="0.3" y2="1"><stop offset="0" stop-color="#8CCBEE"/><stop offset="0.5" stop-color="#3F86CC"/><stop offset="1" stop-color="#1F55B0"/></linearGradient></defs><path d="M6.5 1.2 H28.8 L23.5 22.5 H1.2 Z" fill="url(#psg)" stroke="#5FA2CF" stroke-width="1"/><path d="M10.5 5.5 L18.5 11.8 L9.5 18.5" fill="none" stroke="#FFFFFF" stroke-width="2.4"/><path d="M16.5 18.3 H22" stroke="#A8C8F0" stroke-width="1.8"/></svg>
<svg class="b" style="left:189px;top:1047px;" width="33" height="30" viewBox="0 0 33 30"><defs><linearGradient id="exg" x1="0" y1="0" x2="1" y2="1"><stop offset="0" stop-color="#FAF0B8"/><stop offset="0.6" stop-color="#F7E08A"/><stop offset="1" stop-color="#F9CE3A"/></linearGradient><linearGradient id="exb" x1="0" y1="0" x2="1" y2="1"><stop offset="0" stop-color="#D8F2FB"/><stop offset="1" stop-color="#5FA8DC"/></linearGradient></defs><path d="M1 1.5 Q1 0.5 2 0.5 H15 L16.5 3 V8 H1 Z" fill="#F3DC8C" stroke="#E0B35A" stroke-width="0.8"/><rect x="4" y="1.6" width="3" height="1.6" fill="#12A04A"/><rect x="7" y="1.6" width="4.5" height="1.6" fill="#FFFFFF"/><path d="M10.5 2.5 H29 Q30 2.5 30 3.5 V8 H10.5 Z" fill="#F3DC8C" stroke="#E0B35A" stroke-width="0.8"/><rect x="12" y="3.4" width="3" height="1.7" fill="#D9262A"/><rect x="15" y="3.4" width="6" height="1.7" fill="#FFFFFF"/><path d="M0.6 7 H17 L18.5 5 H31 Q32 5 32 6 V26.5 H0.6 Z" fill="url(#exg)" stroke="#E0B35A" stroke-width="0.9"/><rect x="20" y="5.9" width="3" height="1.7" fill="#2F7FE0"/><rect x="23" y="5.9" width="5.5" height="1.7" fill="#FFFFFF"/><path d="M4.5 29 V18.5 Q4.5 16.5 6.5 16.5 H26 Q28 16.5 28 18.5 V29 H22 V22 H10.5 V29 Z" fill="url(#exb)" stroke="#3F8FD0" stroke-width="0.9"/><path d="M5.5 18 H27" stroke="#EAF8FD" stroke-width="1.4"/></svg>
<svg class="b" style="left:251px;top:1044px;" width="32" height="32" viewBox="0 0 32 32"><circle cx="16" cy="16" r="15.2" fill="#FFCD40"/><path d="M16 16 L2.84 8.4 A15.2 15.2 0 0 1 29.16 8.4 Z" fill="#DB4437"/><path d="M16 0.8 A15.2 15.2 0 0 1 29.16 8.4 H16 Z" fill="#DB4437"/><path d="M2.84 8.4 A15.2 15.2 0 0 0 16 31.2 L22.6 19.8 L16 16 Z" fill="#0F9D58"/><path d="M16 16 L9.4 19.8 L16 31.2 A15.2 15.2 0 0 1 2.84 8.4 Z" fill="#0F9D58"/><path d="M29.16 8.4 A15.2 15.2 0 0 1 16 31.2 L22.6 19.8 A7.6 7.6 0 0 0 16 8.4 Z" fill="#FFCD40"/><circle cx="16" cy="16" r="7" fill="#F1F1F1"/><circle cx="16" cy="16" r="5.6" fill="#4285F4"/></svg>
<svg class="b" style="left:312px;top:1043px;" width="36" height="34" viewBox="0 0 36 34"><defs><radialGradient id="ieg" cx="0.45" cy="0.45" r="0.6"><stop offset="0" stop-color="#8FD4F5"/><stop offset="1" stop-color="#2E8FD8"/></radialGradient></defs><circle cx="18" cy="17" r="10.2" fill="none" stroke="url(#ieg)" stroke-width="6.8"/><rect x="8" y="15.2" width="21" height="4.2" fill="#3E9FE2"/><path d="M22.5 19.4 H33 V24.5 L27.5 22 L22.5 22 Z" fill="#7FD1EE"/><path d="M5.5 30 C1 27 5 17 14 9.5 C22 3 31 1.5 32.5 5" fill="none" stroke="#F2C23E" stroke-width="2.2"/><path d="M5.5 30 C8 31.5 11 30.5 13.5 29" fill="none" stroke="#F2C23E" stroke-width="1.6"/></svg>
<svg class="b" style="left:374px;top:1044px;" width="33" height="32" viewBox="0 0 33 32"><path d="M23.5 0.5 L32 4.5 V27.5 L23.5 31.5 L10 18.5 L3.5 23.5 L0.5 22 V10 L3.5 8.5 L10 13.5 Z M23.5 9.5 L15 16 L23.5 22.5 Z M3.8 12.5 V19.5 L7.5 16 Z" fill="#7A3FC0" fill-rule="evenodd"/><path d="M23.5 0.5 L32 4.5 V27.5 L23.5 31.5 Z" fill="#B183E8"/></svg>
<svg class="b" style="left:1710px;top:1051px;" width="18" height="18" viewBox="0 0 18 18"><path d="M1.5 1 V17" stroke="#FFFFFF" stroke-width="1.6"/><path d="M3 2 C6 0.5 8 3.5 12 2 V9 C8 10.5 6 7.5 3 9 Z" fill="#FFFFFF" stroke="#6A7A84" stroke-width="0.6"/><circle cx="11.5" cy="12.5" r="4.3" fill="#D9261C"/><path d="M9.7 10.7 L13.3 14.3 M13.3 10.7 L9.7 14.3" stroke="#FFFFFF" stroke-width="1.4"/></svg>
<svg class="b" style="left:1734px;top:1051px;" width="17" height="17" viewBox="0 0 17 17"><rect x="9" y="2" width="6.5" height="13" rx="1" fill="#FFFFFF" stroke="#4A5A64" stroke-width="1"/><path d="M2.5 1 V4 M6.5 1 V4" stroke="#4A5A64" stroke-width="1.4"/><path d="M1 4 H8 V8 C8 10 6 10.5 4.5 10.5 C3 10.5 1 10 1 8 Z" fill="#FFFFFF" stroke="#4A5A64"/><path d="M4.5 10.5 V16" stroke="#4A5A64" stroke-width="1.4"/></svg>
<svg class="b" style="left:1758px;top:1051px;" width="18" height="17" viewBox="0 0 18 17"><rect x="5.5" y="3.5" width="11" height="8" fill="#FFFFFF" stroke="#4A5A64"/><path d="M8 14.5 H14 M11 11.5 V14.5" stroke="#4A5A64" stroke-width="1.3"/><rect x="0.5" y="0.5" width="6" height="5" fill="#FFFFFF" stroke="#4A5A64"/><path d="M3.5 5.5 V10 H5.5" fill="none" stroke="#4A5A64"/></svg>
<svg class="b" style="left:1782px;top:1051px;" width="18" height="18" viewBox="0 0 18 18"><path d="M1 6 H4 L8 2 V15 L4 11 H1 Z" fill="#FFFFFF" stroke="#4A5A64" stroke-width="0.9"/><circle cx="12" cy="12" r="4.3" fill="#D9261C"/><path d="M10.2 10.2 L13.8 13.8 M13.8 10.2 L10.2 13.8" stroke="#FFFFFF" stroke-width="1.4"/></svg>
</body></html>
